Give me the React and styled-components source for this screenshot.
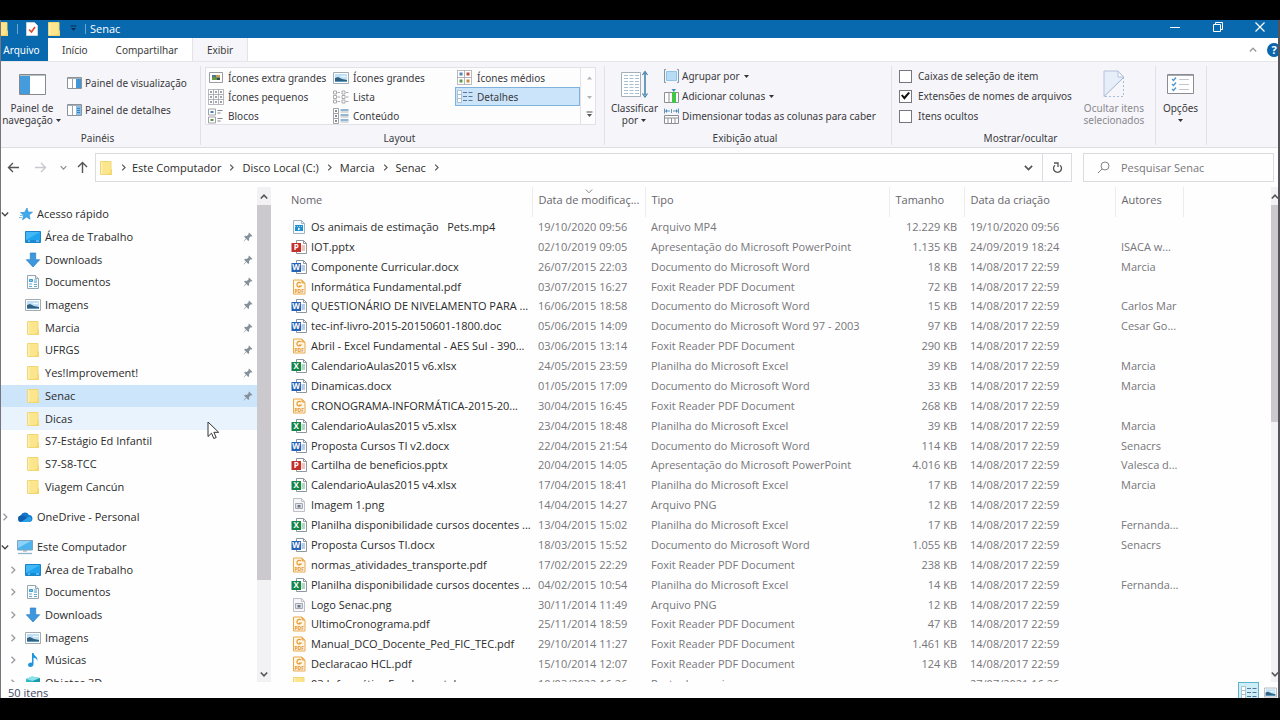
import React from "react";
import styled, { createGlobalStyle } from "styled-components";

const GlobalStyle = createGlobalStyle`
  * {
    box-sizing: border-box;
  }
  body {
    margin: 0;
    background: #000;
  }
  button, input {
    font: inherit;
    color: inherit;
    margin: 0;
  }
  svg {
    display: block;
    flex: none;
  }
`;

const Screen = styled.div`
  height: 100vh;
  padding: 20px 0 22px;
  background: #000;
  font-family: "Open Sans", "Noto Sans", sans-serif;
  font-size: 11px;
  line-height: 16px;
  color: #2b2b2b;
  overflow: hidden;
`;

const Window = styled.div`
  height: 100%;
  display: flex;
  flex-direction: column;
  background: #fefefe;
  border-left: 1px solid #77757c;
  border-right: 2px solid #55535a;
  overflow: hidden;
`;

/* title bar */

const TitleBar = styled.header`
  display: flex;
  align-items: center;
  flex: none;
  height: 18px;
  overflow: hidden;
  background: #0869ae;
  color: #fff;
`;

const QuickTools = styled.div`
  display: flex;
  align-items: center;
  gap: 8px;
  padding-right: 4px;
`;

const QuickSeparator = styled.span`
  width: 1px;
  height: 10px;
  background: #6fa6d0;
`;

const Title = styled.h1`
  flex: 1;
  margin: 0;
  font-size: 11px;
  font-weight: 400;
  line-height: 16px;
`;

const IconButton = styled.button`
  display: flex;
  align-items: center;
  justify-content: center;
  flex: none;
  width: ${(props) => props.$width || 16}px;
  height: ${(props) => props.$height || 16}px;
  padding: 0;
  border: none;
  background: none;
`;

const WindowButtons = styled.div`
  display: flex;
  height: 100%;
  align-items: flex-start;
`;

/* tabs */

const TabBar = styled.nav`
  display: flex;
  flex: none;
  height: 23px;
  background: #fff;
  font-family: "Noto Sans", sans-serif;
  font-size: 10px;
`;

const Tab = styled.button`
  padding: 0 14px;
  border: solid #e3e2e8;
  border-width: ${(props) => (props.$active ? "0 1px" : "0")};
  background: ${(props) => (props.$active ? "#f6f5fa" : "none")};
  color: #3b3b3b;
`;

const FileTab = styled(Tab)`
  width: 47px;
  padding: 0 6px 0 0;
  background: #0869ae;
  color: #fff;
`;

const TabTools = styled.div`
  display: flex;
  align-items: center;
  gap: 10px;
  margin-left: auto;
  width: 29px;
`;

/* ribbon */

const Ribbon = styled.section`
  display: flex;
  flex: none;
  height: 87px;
  padding: 4px 0 2px;
  background: #f6f5fa;
  border-top: 1px solid #e6e5ea;
  border-bottom: 1px solid #dedde2;
  font-family: "Noto Sans", sans-serif;
  font-size: 10px;
  color: #3b3b3f;
`;

const Group = styled.div`
  display: flex;
  flex-direction: column;
  width: ${(props) => props.$width}px;
  border-right: 1px solid #e2e1e7;
`;

const GroupBody = styled.div`
  display: flex;
  flex: 1;
  min-height: 0;
  padding-left: ${(props) => props.$indent || 0}px;
`;

const GroupLabel = styled.div`
  padding-right: 6px;
  text-align: center;
  line-height: 14px;
`;

const BigButton = styled.button`
  display: flex;
  flex-direction: column;
  align-items: center;
  flex: none;
  width: ${(props) => props.$width}px;
  padding: 0;
  border: none;
  background: none;
  line-height: 12px;
  white-space: nowrap;
  color: ${(props) => (props.disabled ? "#8a898e" : "inherit")};
`;

const BigIcon = styled.span`
  display: flex;
  align-items: center;
  height: 36px;
`;

const BigLine = styled.span`
  display: flex;
  align-items: center;
  gap: 2px;
  height: 12px;
`;

const Stack = styled.div`
  display: flex;
  flex-direction: column;
  gap: ${(props) => props.$gap || 0}px;
  padding: ${(props) => props.$top}px 0 0 4px;
`;

const SmallButton = styled.button`
  display: flex;
  align-items: center;
  gap: 3px;
  height: 20px;
  padding: 0;
  border: none;
  background: none;
  white-space: nowrap;
`;

const Gallery = styled.div`
  display: flex;
  width: 391px;
  height: 58px;
  margin-top: 1px;
  background: #fdfdfe;
  border: 1px solid #e2e1e7;
`;

const GalleryGrid = styled.div`
  display: grid;
  grid-template-columns: 125px 124px 125px;
  grid-auto-rows: 19px;
  flex: 1;
`;

const GalleryItem = styled.button`
  display: flex;
  align-items: center;
  gap: 4px;
  padding: 0 1px;
  border: 1px solid ${(props) => (props.$selected ? "#7fb2dc" : "transparent")};
  background: ${(props) => (props.$selected ? "#cbe4fa" : "none")};
  white-space: nowrap;
`;

const GalleryScroll = styled.div`
  display: flex;
  flex-direction: column;
  width: 15px;
  border-left: 1px solid #e2e1e7;
`;

const CheckLabel = styled.label`
  display: flex;
  align-items: center;
  gap: 6px;
  height: 20px;
  white-space: nowrap;
`;

const CheckBox = styled.input`
  appearance: none;
  display: grid;
  place-content: center;
  flex: none;
  width: 13px;
  height: 13px;
  background: #fff;
  border: 1px solid #77767c;

  &:checked::before {
    content: "";
    width: 9px;
    height: 8px;
    background: #111;
    clip-path: polygon(0 45%, 18% 30%, 36% 55%, 82% 0, 100% 14%, 38% 96%);
  }
`;

/* address bar */

const AddressRow = styled.div`
  display: flex;
  align-items: center;
  flex: none;
  height: 39px;
  padding-right: 4px;
`;

const NavButtons = styled.div`
  display: flex;
  align-items: center;
  width: 94px;
  padding-left: 4px;
`;

const AddressBox = styled.div`
  display: flex;
  align-items: center;
  flex: 1;
  height: 29px;
  padding-left: 2px;
  border: 1px solid #dcdbdf;
`;

const Crumb = styled.a`
  color: #2b2b2b;
  text-decoration: none;
  white-space: nowrap;
`;

const AddressEnd = styled.div`
  display: flex;
  align-items: center;
  height: 100%;
  margin-left: auto;
`;

const Refresh = styled(IconButton)`
  height: 100%;
  border-left: 1px solid #dcdbdf;
`;

const SearchBox = styled.label`
  display: flex;
  align-items: center;
  gap: 11px;
  width: 191px;
  height: 29px;
  margin-left: 11px;
  padding-left: 13px;
  border: 1px solid #dcdbdf;
`;

const SearchInput = styled.input`
  flex: 1;
  min-width: 0;
  padding: 0;
  border: none;
  outline: none;
  background: none;

  &::placeholder {
    color: #77767b;
    opacity: 1;
  }
`;

/* body */

const Body = styled.main`
  display: flex;
  flex: 1;
  min-height: 0;
`;

const Sidebar = styled.aside`
  position: relative;
  display: flex;
  flex: none;
  width: 270px;
`;

const Tree = styled.nav`
  flex: 1;
  padding-top: 16px;
  overflow: hidden;
`;

const TreeGroup = styled.ul`
  display: flex;
  flex-direction: column;
  height: ${(props) => props.$height}px;
  margin: 0 0 8px;
  padding: 0;
  list-style: none;
`;

const TreeItem = styled.li`
  display: flex;
  align-items: center;
  flex: 1;
  min-height: 0;
  padding-left: ${(props) => (props.$root ? 0 : 8)}px;
  background: ${(props) =>
    props.$state === "selected"
      ? "#cce5fb"
      : props.$state === "hover"
      ? "#e9f3fd"
      : "none"};
`;

const TreeToggle = styled.span`
  display: flex;
  width: 8px;
  flex: none;
`;

const TreeIcon = styled.span`
  display: flex;
  justify-content: center;
  width: 16px;
  margin: 0 4px 0 8px;
`;

const TreeLink = styled.a`
  flex: 1;
  color: #2b2b2b;
  text-decoration: none;
  white-space: nowrap;
`;

const PinSlot = styled.span`
  padding-right: 4px;
`;

const ScrollTrack = styled.div`
  display: flex;
  flex-direction: column;
  align-items: center;
  flex: none;
  width: ${(props) => props.$width}px;
  padding-top: 2px;
  background: #f2f1f4;
  overflow: hidden;
`;

const ScrollThumb = styled.div`
  width: 100%;
  height: ${(props) => props.$size};
  background: #cbc9cd;
`;

const ScrollEnd = styled.div`
  margin-top: auto;
`;

const Pointer = styled.div`
  position: absolute;
  left: 206px;
  top: 234px;
`;

const FilePane = styled.section`
  flex: 1;
  min-width: 0;
  padding-left: 14px;
  overflow: hidden;
`;

const FileTable = styled.table`
  width: 100%;
  height: calc(100% + 12px);
  table-layout: fixed;
  border-collapse: collapse;
`;

const HeadCell = styled.th`
  position: relative;
  height: 30px;
  padding: 0 0 4px 6px;
  border-right: 1px solid #ececef;
  color: #66656b;
  font-weight: 400;
  text-align: left;
  white-space: nowrap;
  overflow: hidden;

  &:last-child {
    border: none;
  }
`;

const SortMark = styled.span`
  position: absolute;
  top: 0;
  left: 52px;
`;

const Cell = styled.td`
  padding: ${(props) => (props.$right ? "0 7px 0 0" : "0 0 0 6px")};
  color: #77767b;
  text-align: ${(props) => (props.$right ? "right" : "left")};
  white-space: nowrap;
  overflow: hidden;
`;

const FileName = styled.div`
  display: flex;
  align-items: center;
  gap: 4px;
  height: 16px;
  color: #2b2b2b;
`;

const FileText = styled.span`
  flex: 1;
  white-space: pre;
`;

const StatusBar = styled.footer`
  display: flex;
  flex: none;
  height: 16px;
  padding: 3px 0 0 7px;
  overflow: hidden;
  color: #3d4a66;
`;

const ViewButtons = styled.div`
  display: flex;
  gap: 4px;
  margin: -3px 0 0 auto;
`;

const ViewButton = styled(IconButton)`
  align-items: flex-start;
  padding-top: ${(props) => (props.$on ? 2 : 3)}px;
  border: solid ${(props) => (props.$on ? "#5eb3cc" : "transparent")};
  border-width: 1px 1px 0;
  background: ${(props) => (props.$on ? "#cdeef8" : "none")};
`;

/* icons */

const Chevron = ({ dir = "right", color = "#555", size = 8, weight = 1.3 }) => {
  const d = {
    right: "M2.5 0.8 L5.8 4 L2.5 7.2",
    down: "M0.8 2.5 L4 5.8 L7.2 2.5",
    up: "M0.8 5.5 L4 2.2 L7.2 5.5",
  }[dir];
  return (
    <svg width={size} height={size} viewBox="0 0 8 8">
      <path d={d} fill="none" stroke={color} strokeWidth={weight} />
    </svg>
  );
};

const Caret = ({ color = "#333", dir = "down", bar }) => (
  <svg width="7" height="8" viewBox="0 0 7 8">
    {bar && <path d="M0.5 1h6" stroke={color} />}
    <path d={dir === "up" ? "M1 5.5h5L3.5 2.5z" : "M1 3h5L3.5 6z"} fill={color} />
  </svg>
);

const Folder = ({ cut }) => (
  <svg width={cut ? 8 : 16} height="16" viewBox={cut ? "7 0 8 16" : "0 0 16 16"}>
    <path d="M2.5 1.5h10.5v13H2.5z" fill="#fbe58d" stroke="#f0d774" />
    <path d="M12.5 9.5h1.500v5.500H9v-1l3.500-1z" fill="#f3d76c" />
    <path d="M3 2h1.5v12H3z" fill="#fdf0b2" />
  </svg>
);

const Desktop = () => (
  <svg width="16" height="16" viewBox="0 0 16 16">
    <path d="M0.5 2.5h15v11H0.5z" fill="#1fa3ee" stroke="#1b83c6" />
    <path d="M1 3h14L1 11z" fill="#42b8f7" />
    <path d="M1 12h14" stroke="#1276b8" />
    <path d="M3 12h2M11 12h3" stroke="#9fdcff" />
  </svg>
);

const Download = () => (
  <svg width="16" height="16" viewBox="0 0 16 16">
    <path d="M5.3 1h5.4v6.7h4L8 15 1.3 7.7h4z" fill="#3d97dd" stroke="#2a7fc6" strokeWidth=".7" />
  </svg>
);

const Documents = () => (
  <svg width="16" height="16" viewBox="0 0 16 16">
    <path d="M2.5 1.5h8l3 3v10h-11z" fill="#f8fbfd" stroke="#97a5ae" />
    <path d="M10.5 1.5v3h3" fill="#dfe8ee" stroke="#97a5ae" />
    <path d="M4.5 5.5h3v2h-3zM9 8h3" stroke="#3f9bc9" fill="#83c6e4" />
    <path d="M4 10h3M9 6h3M4 12.5h3M9 10.5h3M9 12.5h3" stroke="#67a9cc" />
  </svg>
);

const Picture = ({ width = 16, height = 16 }) => (
  <svg width={width} height={height} viewBox="0 0 16 16">
    <path d="M0.5 2.5h15v11H0.5z" fill="#fff" stroke="#a3abb3" />
    <path d="M2 4h12v8H2z" fill="#bfe0f6" />
    <path d="M2 8l3-1 4 2 5 1v2H2z" fill="#31617f" />
    <path d="M2 11h12v1H2z" fill="#5a9bc4" />
    <path d="M8 6h5v1H8z" fill="#f2fafe" />
  </svg>
);

const Star = () => (
  <svg width="16" height="16" viewBox="0 0 16 16">
    <path d="M10 2l1.2 4 4.3.2-3.400 2.700 1 4.300L9.600 11 5.500 13.800l1.200-4.500L3.500 6.600l4.200-.3z" fill="#3fa9ea" stroke="#248bd0" strokeWidth=".6" />
    <path d="M3 9.500h3M2 11.500h3" stroke="#7cc6f3" />
  </svg>
);

const Cloud = () => (
  <svg width="16" height="16" viewBox="0 0 16 16">
    <path d="M3.5 13a3.4 3.4 0 0 1 .2-6.6A4.6 4.6 0 0 1 12 6a3.6 3.6 0 0 1 1 7z" fill="#1277ca" />
    <path d="M3.5 13c3-1 4.500-4 9-5.500A3 3 0 0 1 13 13z" fill="#2aa0e8" />
    <path d="M3.700 6.400C6 6 8.500 8 10 9L3.500 13a3.400 3.400 0 0 1 .2-6.600" fill="#0d5fae" />
  </svg>
);

const Computer = () => (
  <svg width="16" height="16" viewBox="0 0 16 16">
    <path d="M0.500 1.500h15v9.500h-15z" fill="#4db3ee" stroke="#7fa4bb" />
    <path d="M1 2h13L1 9z" fill="#8bd2fa" />
    <path d="M6 12h4" stroke="#8fa0ad" />
    <path d="M1 14.500h14" stroke="#8fb3c8" strokeWidth="1.300" />
  </svg>
);

const Music = () => (
  <svg width="16" height="16" viewBox="0 0 16 16">
    <path d="M7 1h1.500c.5 3 4.500 3.500 4 8-.5-2-2-3-4-3.200V12c0 2-1.300 3-3 3-1.500 0-2.500-.8-2.500-2 0-1.800 2-2.700 4-2.300z" fill="#1e94dc" />
  </svg>
);

const Objects3D = () => (
  <svg width="16" height="16" viewBox="0 0 16 16">
    <path d="M1 4l6-2.500L15 3v9l-7 3-7-3z" fill="#31b8c6" />
    <path d="M1 4l6-2.500L15 3 8 6z" fill="#8ce2e8" />
    <path d="M8 6l7-3v9l-7 3z" fill="#1b9aad" />
  </svg>
);

const Pin = () => (
  <svg width="10" height="10" viewBox="0 0 10 10">
    <path d="M6 0.500l3.500 3.500-1 .5-.8-.2L6 6.200 6.200 8l-.9.900L3.400 7 .8 9.500.5 9.200 3 6.600 1.100 4.700l.9-.9 1.800.2 1.900-1.700-.2-.8z" fill="#84909a" />
  </svg>
);

const OfficeIcon = ({ letter, color, tint }) => (
  <svg width="16" height="16" viewBox="0 0 16 16">
    <path d="M5.500 1.500h7l3 3v10h-10z" fill="#fff" stroke="#8e979e" />
    <path d="M12.500 1.500v3h3" fill="none" stroke="#8e979e" />
    <path d="M10.500 7h3.500M10.500 9h3.500M10.500 11h3.500" stroke={tint} />
    <path d="M0.500 4h9.500v9H0.500z" fill={color} />
    <text x="5.200" y="11.200" textAnchor="middle" fontSize="8" fontWeight="700" fill="#fff">
      {letter}
    </text>
  </svg>
);

const PdfIcon = () => (
  <svg width="16" height="16" viewBox="0 0 16 16">
    <path d="M2.500 1h8.500l3 3v11h-11.500z" fill="#fff6e4" stroke="#eaa84c" />
    <path d="M11 1v3h3" fill="#f0b866" stroke="#eaa84c" />
    <path d="M9.800 4A2.300 2.300 0 1 0 10 7.200H8" fill="none" stroke="#e79a35" strokeWidth="1.200" />
    <text x="8.200" y="13.800" textAnchor="middle" fontSize="5" fontWeight="700" fill="#e3922a">
      PDF
    </text>
  </svg>
);

const VideoIcon = () => (
  <svg width="16" height="16" viewBox="0 0 16 16">
    <path d="M2.500 1.500h8l3 3v10h-11z" fill="#f4fafd" stroke="#9fb4c0" />
    <path d="M10.500 1.500v3h3" fill="none" stroke="#9fb4c0" />
    <path d="M4 6h8v6H4z" fill="#1f91d0" />
    <path d="M4 7.500h8" stroke="#8fd2f4" strokeDasharray="1 1" />
    <path d="M7 8.500v3l2.500-1.500z" fill="#fff" />
  </svg>
);

const PngIcon = () => (
  <svg width="16" height="16" viewBox="0 0 16 16">
    <path d="M2.500 1.500h8l3 3v10h-11z" fill="#f7f7f9" stroke="#bfbfc6" />
    <path d="M10.500 1.500v3h3" fill="none" stroke="#bfbfc6" />
    <path d="M4.500 6.500h7v5h-7z" fill="#dfe3ea" stroke="#a3a8b2" />
    <path d="M6.500 8h3v2.500h-3z" fill="#6d7480" />
  </svg>
);

const fileIcons = {
  mp4: <VideoIcon />,
  ppt: <OfficeIcon letter="P" color="#c2302c" tint="#e08a80" />,
  doc: <OfficeIcon letter="W" color="#2a62b5" tint="#6f9bd6" />,
  xls: <OfficeIcon letter="X" color="#17854a" tint="#63b088" />,
  pdf: <PdfIcon />,
  png: <PngIcon />,
  dir: <Folder />,
};

const PaneIcon = ({ side }) => (
  <svg width="15" height="12" viewBox="0 0 15 12">
    <path d="M0.500 0.500h14v11h-14z" fill="#fff" stroke="#8c939a" />
    <path d="M1 1.500h13" stroke="#a5adb5" />
    <path d="M5.500 2v9" stroke="#9aa3ab" />
    <path d="M9 2h5v9H9z" fill={side === "details" ? "#86bfe9" : "#4295d6"} />
    {side === "details" && <path d="M10 4.500h3M10 6.500h3M10 8.500h3" stroke="#3c83bd" />}
  </svg>
);

const NavPaneIcon = () => (
  <svg width="27" height="21" viewBox="0 0 27 21">
    <path d="M0.500 0.500h26v20h-26z" fill="#fff" stroke="#84898f" />
    <path d="M1 1.500h25" stroke="#b9bec4" />
    <path d="M1 2h10v18H1z" fill="#459cdc" />
  </svg>
);

const GridThumb = ({ kind }) => {
  if (kind === "extra") {
    return (
      <svg width="16" height="16" viewBox="0 0 16 16">
        <path d="M1.500 2.500h13v10h-13z" fill="#fff" stroke="#9a9aa2" />
        <path d="M4 5h8v5H4z" fill="#4a7a8e" />
        <path d="M4 8l2-1.500 3 2.500v1H4z" fill="#6a9c3c" />
        <path d="M8 5h4v2.500H8z" fill="#c9a14c" />
        <path d="M9 8h3v2H9z" fill="#3a4c56" />
      </svg>
    );
  }
  if (kind === "medium" || kind === "small") {
    const n = kind === "medium" ? 2 : 3;
    const size = n === 2 ? 7 : 5;
    const marks = ["#4a86b8", "#b5563d", "#5c9a4c", "#c28d3c"];
    return (
      <svg width="16" height="16" viewBox="0 0 16 16">
        {Array.from({ length: n * n }, (_, i) => {
          const x = (i % n) * size + 0.5;
          const y = Math.floor(i / n) * size + 0.5;
          return (
            <g key={i}>
              <rect x={x} y={y} width={size} height={size} fill="#fff" stroke="#aaa9b0" strokeWidth=".8" />
              <rect
                x={x + size / 2 - (n === 2 ? 1.5 : 0.8)}
                y={y + size / 2 - (n === 2 ? 1.5 : 0.8)}
                width={n === 2 ? 3 : 1.6}
                height={n === 2 ? 3 : 1.6}
                fill={n === 2 ? marks[i] : "#66707a"}
              />
            </g>
          );
        })}
      </svg>
    );
  }
  if (kind === "list") {
    return (
      <svg width="16" height="16" viewBox="0 0 16 16">
        {[2, 6.5, 11].map((y) => (
          <g key={y} fill="#fff" stroke="#95959d" strokeWidth=".8">
            <path d={`M0.5 ${y}h3v3h-3zM9 ${y}h3v3H9z`} />
            <path d={`M4.5 ${y + 1.5}h2.5M13 ${y + 1.5}h2.5`} />
          </g>
        ))}
      </svg>
    );
  }
  if (kind === "tiles") {
    return (
      <svg width="16" height="16" viewBox="0 0 16 16">
        <path d="M0.500 1h7v6h-7zM0.500 9h7v6h-7z" fill="#fff" stroke="#a2a1a9" />
        <path d="M2.500 3h3v2h-3z" fill="#3f83b8" />
        <path d="M2.500 11h3v2h-3z" fill="#5c9346" />
        <path d="M9.500 2.500h5M9.500 5h3M9.500 10.500h5M9.500 13h3" stroke="#7f868d" />
      </svg>
    );
  }
  if (kind === "content") {
    return (
      <svg width="16" height="16" viewBox="0 0 16 16">
        <path d="M0.500 0.500h5v5h-5zM0.500 5.500h5v5h-5zM0.500 10.500h5v5h-5z" fill="#fff" stroke="#a2a1a9" />
        <path d="M2 3h2M2 8h2M2 13h2" stroke="#5c6a74" strokeWidth="1.500" />
        <path d="M7.500 2h8M7.500 7h8M7.500 12h8" stroke="#6d9fc6" strokeWidth="1.400" />
        <path d="M7.500 4h8M7.500 9h8M7.500 14h8" stroke="#b3b6bc" />
      </svg>
    );
  }
  return (
    <svg width="16" height="16" viewBox="0 0 16 16">
      {[3.5, 7.5, 11.5].map((y) => (
        <g key={y}>
          <path d={`M0.5 ${y - 2}h4v4h-4z`} fill="#fff" stroke="#a2b5c4" strokeWidth=".8" />
          <path d={`M6 ${y}h4M11.5 ${y}h4`} stroke="#55799e" />
        </g>
      ))}
    </svg>
  );
};

const SortIcon = () => (
  <svg width="27" height="28" viewBox="0 0 27 28">
    <path d="M0.500 2.500h19v24h-19z" fill="#fff" stroke="#a4b0b9" />
    <path d="M3 5.500h15M3 8.500h15M3 11.500h15M3 14.500h15M3 17.500h15M3 20.500h15M3 23.500h15" stroke="#a9c0d0" strokeDasharray="4 1.500" />
    <path d="M24 3v22" stroke="#3c7fa6" strokeWidth="1.500" />
    <path d="M21.500 5L24 1.500 26.500 5M21.500 23.500L24 27l2.500-3.500" fill="none" stroke="#3c7fa6" strokeWidth="1.200" />
  </svg>
);

const GroupByIcon = () => (
  <svg width="15" height="14" viewBox="0 0 15 14">
    <path d="M2.500 2.500h10v9h-10z" fill="#b7dcf6" stroke="#92c3e6" />
    <path d="M2 0.500H0.500v13H2M13 0.500h1.500v13H13" fill="none" stroke="#7e97a8" />
  </svg>
);

const AddColumnIcon = () => (
  <svg width="15" height="15" viewBox="0 0 15 15">
    <path d="M0.500 3.500h14v10h-14zM5 3.500v10" fill="#fff" stroke="#8b8f94" />
    <path d="M8 3h4v11H8z" fill="#43c648" />
    <path d="M7.500 0h4.500L9.800 3z" fill="#3f8fc6" />
  </svg>
);

const FitColumnsIcon = () => (
  <svg width="15" height="16" viewBox="0 0 15 16">
    <path d="M0.500 0.500v5M14.500 0.500v5M2 3h4M9 3h4M7.500 1v4" stroke="#5f96bd" />
    <path d="M1 3l2-2v4zM14 3l-2-2v4z" fill="#4a87b3" />
    <path d="M0.500 7.500h14v8h-14zM0.500 10h14M4 10v5.500M7.500 10v5.500M11 10v5.500" fill="#fff" stroke="#8b8f94" />
  </svg>
);

const HideIcon = () => (
  <svg width="22" height="28" viewBox="0 0 22 28">
    <path d="M1 1h14l6 6L1 26.500z" fill="#e6eefa" />
    <path d="M1 26.500V1h14l5.500 5.500" fill="none" stroke="#b3c3dc" />
    <path d="M15 1v6h5.500z" fill="#fafcff" stroke="#b3c3dc" />
    <path d="M1 26.500L20.500 7.500" stroke="#a3b5d2" />
    <path d="M20.500 7v19.500H1" fill="none" stroke="#a9bcd8" strokeDasharray="2 2" />
  </svg>
);

const OptionsIcon = () => (
  <svg width="27" height="20" viewBox="0 0 27 20">
    <path d="M0.500 0.500h26v19h-26z" fill="#fff" stroke="#8b8c91" />
    <path d="M1 1.500h25" stroke="#a9aaaf" />
    <path d="M5 5l1.500 1.500L9 3.500M5 10l1.500 1.500L9 8.500M5 15l1.500 1.500L9 13.500" fill="none" stroke="#4b95d2" strokeWidth="1.300" />
    <path d="M12 5.500h10M12 10.500h10M12 15.500h10" stroke="#c4c6cb" />
  </svg>
);

const Arrow = ({ dir, color }) => (
  <svg width="13" height="13" viewBox="0 0 13 13">
    <path
      d={
        dir === "left"
          ? "M12 6.500H1.500M6 2L1.500 6.500 6 11"
          : dir === "right"
          ? "M1 6.500h10.500M7 2l4.500 4.500L7 11"
          : "M6.500 12V1.500M2 6l4.500-4.500L11 6"
      }
      fill="none"
      stroke={color}
      strokeWidth="1.400"
    />
  </svg>
);

const CheckPage = () => (
  <svg width="12" height="14" viewBox="0 0 12 14">
    <path d="M0.500 0.500h8l3 3v10H0.500z" fill="#fff" stroke="#c9d3dc" />
    <path d="M3 7.500l2.500 2.500L9 5" fill="none" stroke="#e0472e" strokeWidth="1.600" />
  </svg>
);

/* data */

const galleryItems = [
  ["extra", "Ícones extra grandes"],
  ["large", "Ícones grandes"],
  ["medium", "Ícones médios"],
  ["small", "Ícones pequenos"],
  ["list", "Lista"],
  ["details", "Detalhes"],
  ["tiles", "Blocos"],
  ["content", "Conteúdo"],
];

const crumbs = ["Este Computador", "Disco Local (C:)", "Marcia", "Senac"];

const quickAccess = [
  { text: "Área de Trabalho", icon: <Desktop />, pinned: true },
  { text: "Downloads", icon: <Download />, pinned: true },
  { text: "Documentos", icon: <Documents />, pinned: true },
  { text: "Imagens", icon: <Picture />, pinned: true },
  { text: "Marcia", icon: <Folder />, pinned: true },
  { text: "UFRGS", icon: <Folder />, pinned: true },
  { text: "Yes!Improvement!", icon: <Folder />, pinned: true },
  { text: "Senac", icon: <Folder />, pinned: true, state: "selected" },
  { text: "Dicas", icon: <Folder />, state: "hover" },
  { text: "S7-Estágio Ed Infantil", icon: <Folder /> },
  { text: "S7-S8-TCC", icon: <Folder /> },
  { text: "Viagem Cancún", icon: <Folder /> },
];

const computer = [
  { text: "Área de Trabalho", icon: <Desktop />, toggle: true },
  { text: "Documentos", icon: <Documents />, toggle: true },
  { text: "Downloads", icon: <Download />, toggle: true },
  { text: "Imagens", icon: <Picture />, toggle: true },
  { text: "Músicas", icon: <Music />, toggle: true },
  { text: "Objetos 3D", icon: <Objects3D />, toggle: true },
];

const WORD = "Documento do Microsoft Word";
const EXCEL = "Planilha do Microsoft Excel";
const POWERPOINT = "Apresentação do Microsoft PowerPoint";
const PDF = "Foxit Reader PDF Document";
const CREATED = "14/08/2017 22:59";

const files = [
  ["mp4", "Os animais de estimação   Pets.mp4", "19/10/2020 09:56", "Arquivo MP4", "12.229 KB", "19/10/2020 09:56", ""],
  ["ppt", "IOT.pptx", "02/10/2019 09:05", POWERPOINT, "1.135 KB", "24/09/2019 18:24", "ISACA w..."],
  ["doc", "Componente Curricular.docx", "26/07/2015 22:03", WORD, "18 KB", CREATED, "Marcia"],
  ["pdf", "Informática Fundamental.pdf", "03/07/2015 16:27", PDF, "72 KB", CREATED, ""],
  ["doc", "QUESTIONÁRIO DE NIVELAMENTO PARA ...", "16/06/2015 18:58", WORD, "15 KB", CREATED, "Carlos Mar"],
  ["doc", "tec-inf-livro-2015-20150601-1800.doc", "05/06/2015 14:09", "Documento do Microsoft Word 97 - 2003", "97 KB", CREATED, "Cesar Go..."],
  ["pdf", "Abril - Excel Fundamental - AES Sul - 390...", "03/06/2015 13:14", PDF, "290 KB", CREATED, ""],
  ["xls", "CalendarioAulas2015 v6.xlsx", "24/05/2015 23:59", EXCEL, "39 KB", CREATED, "Marcia"],
  ["doc", "Dinamicas.docx", "01/05/2015 17:09", WORD, "33 KB", CREATED, "Marcia"],
  ["pdf", "CRONOGRAMA-INFORMÁTICA-2015-20...", "30/04/2015 16:45", PDF, "268 KB", CREATED, ""],
  ["xls", "CalendarioAulas2015 v5.xlsx", "23/04/2015 18:48", EXCEL, "39 KB", CREATED, "Marcia"],
  ["doc", "Proposta Cursos TI v2.docx", "22/04/2015 21:54", WORD, "114 KB", CREATED, "Senacrs"],
  ["ppt", "Cartilha de beneficios.pptx", "20/04/2015 14:05", POWERPOINT, "4.016 KB", CREATED, "Valesca d..."],
  ["xls", "CalendarioAulas2015 v4.xlsx", "17/04/2015 18:41", EXCEL, "17 KB", CREATED, "Marcia"],
  ["png", "Imagem 1.png", "14/04/2015 14:27", "Arquivo PNG", "12 KB", CREATED, ""],
  ["xls", "Planilha disponibilidade cursos docentes ...", "13/04/2015 15:02", EXCEL, "17 KB", CREATED, "Fernanda..."],
  ["doc", "Proposta Cursos TI.docx", "18/03/2015 15:52", WORD, "1.055 KB", CREATED, "Senacrs"],
  ["pdf", "normas_atividades_transporte.pdf", "17/02/2015 22:29", PDF, "238 KB", CREATED, ""],
  ["xls", "Planilha disponibilidade cursos docentes ...", "04/02/2015 10:54", EXCEL, "14 KB", CREATED, "Fernanda..."],
  ["png", "Logo Senac.png", "30/11/2014 11:49", "Arquivo PNG", "12 KB", CREATED, ""],
  ["pdf", "UltimoCronograma.pdf", "25/11/2014 18:59", PDF, "47 KB", CREATED, ""],
  ["pdf", "Manual_DCO_Docente_Ped_FIC_TEC.pdf", "29/10/2014 11:27", PDF, "1.461 KB", CREATED, ""],
  ["pdf", "Declaracao HCL.pdf", "15/10/2014 12:07", PDF, "124 KB", CREATED, ""],
  ["dir", "03 Informática Fundamental", "10/03/2022 16:26", "Pasta de arquivos", "", "27/07/2021 16:26", ""],
];

const columnWidths = [247, 113, 244, 75, 151, 68];

const TreeRow = ({ item, root, open }) => (
  <TreeItem $root={root} $state={item.state}>
    <TreeToggle>
      {(root || item.toggle) && (
        <Chevron
          dir={open ? "down" : "right"}
          color={open ? "#444" : "#9a999e"}
        />
      )}
    </TreeToggle>
    <TreeIcon>{item.icon}</TreeIcon>
    <TreeLink href="#">{item.text}</TreeLink>
    {item.pinned && (
      <PinSlot>
        <Pin />
      </PinSlot>
    )}
  </TreeItem>
);

const ViewRibbon = () => (
  <Ribbon>
    <Group $width={200}>
      <GroupBody>
        <BigButton $width={62}>
          <BigIcon>
            <NavPaneIcon />
          </BigIcon>
          <BigLine>Painel de</BigLine>
          <BigLine>
            navegação <Caret />
          </BigLine>
        </BigButton>
        <Stack $top={7} $gap={7}>
          <SmallButton>
            <PaneIcon side="preview" /> Painel de visualização
          </SmallButton>
          <SmallButton>
            <PaneIcon side="details" /> Painel de detalhes
          </SmallButton>
        </Stack>
      </GroupBody>
      <GroupLabel>Painéis</GroupLabel>
    </Group>
    <Group $width={404}>
      <GroupBody $indent={4}>
        <Gallery>
          <GalleryGrid>
            {galleryItems.map(([kind, text]) => (
              <GalleryItem key={kind} $selected={kind === "details"}>
                {kind === "large" ? <Picture /> : <GridThumb kind={kind} />}
                {text}
              </GalleryItem>
            ))}
          </GalleryGrid>
          <GalleryScroll>
            <IconButton $height={19} aria-label="Acima">
              <Caret dir="up" color="#b3b2b8" />
            </IconButton>
            <IconButton $height={19} aria-label="Abaixo">
              <Caret color="#b3b2b8" />
            </IconButton>
            <IconButton $height={17} aria-label="Mais">
              <Caret bar color="#555" />
            </IconButton>
          </GalleryScroll>
        </Gallery>
      </GroupBody>
      <GroupLabel>Layout</GroupLabel>
    </Group>
    <Group $width={287}>
      <GroupBody $indent={4}>
        <BigButton $width={51}>
          <BigIcon>
            <SortIcon />
          </BigIcon>
          <BigLine>Classificar</BigLine>
          <BigLine>
            por <Caret />
          </BigLine>
        </BigButton>
        <Stack $top={0}>
          <SmallButton>
            <GroupByIcon /> Agrupar por <Caret />
          </SmallButton>
          <SmallButton>
            <AddColumnIcon /> Adicionar colunas <Caret />
          </SmallButton>
          <SmallButton>
            <FitColumnsIcon /> Dimensionar todas as colunas para caber
          </SmallButton>
        </Stack>
      </GroupBody>
      <GroupLabel>Exibição atual</GroupLabel>
    </Group>
    <Group $width={264}>
      <GroupBody $indent={3}>
        <Stack $top={0}>
          <CheckLabel>
            <CheckBox type="checkbox" /> Caixas de seleção de item
          </CheckLabel>
          <CheckLabel>
            <CheckBox type="checkbox" defaultChecked /> Extensões de nomes de arquivos
          </CheckLabel>
          <CheckLabel>
            <CheckBox type="checkbox" /> Itens ocultos
          </CheckLabel>
        </Stack>
        <BigButton $width={84} disabled>
          <BigIcon>
            <HideIcon />
          </BigIcon>
          <BigLine>Ocultar itens</BigLine>
          <BigLine>selecionados</BigLine>
        </BigButton>
      </GroupBody>
      <GroupLabel>Mostrar/ocultar</GroupLabel>
    </Group>
    <Group $width={51}>
      <BigButton $width={49}>
        <BigIcon>
          <OptionsIcon />
        </BigIcon>
        <BigLine>Opções</BigLine>
        <BigLine>
          <Caret />
        </BigLine>
      </BigButton>
    </Group>
  </Ribbon>
);

const App = () => {
  return (
    <Screen>
      <GlobalStyle />
      <Window>
        <TitleBar>
          <QuickTools>
            <Folder cut />
            <QuickSeparator />
            <CheckPage />
            <Folder />
            <Caret bar color="#0b2c4a" />
            <QuickSeparator />
          </QuickTools>
          <Title>Senac</Title>
          <WindowButtons>
            <IconButton $width={38} $height={14} aria-label="Minimizar">
              <svg width="10" height="10" viewBox="0 0 10 10">
                <path d="M0 5.500h10" stroke="#fff" />
              </svg>
            </IconButton>
            <IconButton $width={48} $height={14} aria-label="Restaurar">
              <svg width="10" height="10" viewBox="0 0 10 10">
                <path d="M0.500 2.500h7v7h-7zM2.500 2.500v-2h7v7h-2" fill="none" stroke="#fff" />
              </svg>
            </IconButton>
            <IconButton $width={36} $height={14} aria-label="Fechar">
              <svg width="10" height="10" viewBox="0 0 10 10">
                <path d="M0.500 0.500l9 9M9.500 0.500l-9 9" stroke="#fff" strokeWidth="1.200" />
              </svg>
            </IconButton>
          </WindowButtons>
        </TitleBar>

        <TabBar>
          <FileTab>Arquivo</FileTab>
          <Tab>Início</Tab>
          <Tab>Compartilhar</Tab>
          <Tab $active>Exibir</Tab>
          <TabTools>
            <Chevron dir="up" color="#9a999e" />
            <svg width="14" height="14" viewBox="0 0 14 14">
              <circle cx="7" cy="7" r="7" fill="#0c66ad" />
              <text x="7" y="11" textAnchor="middle" fontSize="11" fontWeight="700" fill="#fff">
                ?
              </text>
            </svg>
          </TabTools>
        </TabBar>

        <ViewRibbon />

        <AddressRow>
          <NavButtons>
            <IconButton $width={16} aria-label="Voltar">
              <Arrow dir="left" color="#555" />
            </IconButton>
            <IconButton $width={38} aria-label="Avançar">
              <Arrow dir="right" color="#c9c8cd" />
            </IconButton>
            <IconButton $width={8} aria-label="Locais recentes">
              <Chevron dir="down" color="#8a898e" size={7} />
            </IconButton>
            <IconButton $width={30} aria-label="Acima">
              <Arrow dir="up" color="#555" />
            </IconButton>
          </NavButtons>
          <AddressBox>
            <Folder />
            {crumbs.map((text, i) => (
              <React.Fragment key={text}>
                <IconButton $width={i === 0 ? 18 : 21} aria-label="Expandir">
                  <Chevron size={7} />
                </IconButton>
                <Crumb href="#">{text}</Crumb>
              </React.Fragment>
            ))}
            <IconButton $width={21} aria-label="Expandir">
              <Chevron size={7} />
            </IconButton>
            <AddressEnd>
              <IconButton $width={27} aria-label="Histórico">
                <Chevron dir="down" size={9} weight={1.5} />
              </IconButton>
              <Refresh $width={29} aria-label="Atualizar">
                <svg width="11" height="12" viewBox="0 0 11 12">
                  <path d="M8 3.200A4 4 0 1 1 3 3.200" fill="none" stroke="#555" strokeWidth="1.300" />
                  <path d="M2 1h4v4" fill="none" stroke="#555" strokeWidth="1.300" />
                </svg>
              </Refresh>
            </AddressEnd>
          </AddressBox>
          <SearchBox>
            <svg width="13" height="13" viewBox="0 0 13 13">
              <circle cx="8" cy="5" r="4" fill="none" stroke="#85848a" />
              <path d="M5 8L1 12" stroke="#85848a" />
            </svg>
            <SearchInput aria-label="Pesquisar" placeholder="Pesquisar Senac" />
          </SearchBox>
        </AddressRow>

        <Body>
          <Sidebar>
            <Tree>
              <TreeGroup $height={295}>
                <TreeRow root open item={{ text: "Acesso rápido", icon: <Star /> }} />
                {quickAccess.map((item) => (
                  <TreeRow key={item.text} item={item} />
                ))}
              </TreeGroup>
              <TreeGroup $height={22}>
                <TreeRow root item={{ text: "OneDrive - Personal", icon: <Cloud /> }} />
              </TreeGroup>
              <TreeGroup $height={158}>
                <TreeRow root open item={{ text: "Este Computador", icon: <Computer /> }} />
                {computer.map((item) => (
                  <TreeRow key={item.text} item={item} />
                ))}
              </TreeGroup>
            </Tree>
            <ScrollTrack $width={14}>
              <IconButton $width={14} aria-label="Rolar para cima">
                <Chevron dir="up" weight={1.6} />
              </IconButton>
              <ScrollThumb $size="76%" />
              <ScrollEnd>
                <IconButton $width={14} aria-label="Rolar para baixo">
                  <Chevron dir="down" weight={1.6} />
                </IconButton>
              </ScrollEnd>
            </ScrollTrack>
            <Pointer>
              <svg width="13" height="19" viewBox="0 0 13 19">
                <path d="M1 1v14.500l3.500-3.300 2.300 5.300 2.400-1-2.300-5.200h4.800z" fill="#fff" stroke="#333" />
              </svg>
            </Pointer>
          </Sidebar>

          <FilePane>
            <FileTable>
              <colgroup>
                {columnWidths.map((width, i) => (
                  <col key={i} width={width} />
                ))}
                <col />
              </colgroup>
              <thead>
                <tr>
                  <HeadCell>Nome</HeadCell>
                  <HeadCell>
                    Data de modificaç...
                    <SortMark>
                      <Chevron dir="down" color="#8a898e" weight={1} />
                    </SortMark>
                  </HeadCell>
                  <HeadCell>Tipo</HeadCell>
                  <HeadCell>Tamanho</HeadCell>
                  <HeadCell>Data da criação</HeadCell>
                  <HeadCell>Autores</HeadCell>
                  <HeadCell />
                </tr>
              </thead>
              <tbody>
                {files.map(([icon, name, modified, type, size, created, author]) => (
                  <tr key={name + modified}>
                    <Cell>
                      <FileName>
                        {fileIcons[icon]}
                        <FileText>{name}</FileText>
                      </FileName>
                    </Cell>
                    <Cell>{modified}</Cell>
                    <Cell>{type}</Cell>
                    <Cell $right>{size}</Cell>
                    <Cell>{created}</Cell>
                    <Cell>{author}</Cell>
                    <Cell />
                  </tr>
                ))}
              </tbody>
            </FileTable>
          </FilePane>
          <ScrollTrack $width={7}>
            <IconButton $width={8} aria-label="Rolar para cima">
              <Chevron dir="up" weight={1.6} />
            </IconButton>
            <ScrollThumb $size="44%" />
            <ScrollEnd>
              <IconButton $width={8} aria-label="Rolar para baixo">
                <Chevron dir="down" weight={1.6} />
              </IconButton>
            </ScrollEnd>
          </ScrollTrack>
        </Body>

        <StatusBar>
          50 itens
          <ViewButtons>
            <ViewButton $on $width={21} aria-label="Detalhes">
              <GridThumb kind="details" />
            </ViewButton>
            <ViewButton $width={15} aria-label="Miniaturas">
              <Picture width={13} height={13} />
            </ViewButton>
          </ViewButtons>
        </StatusBar>
      </Window>
    </Screen>
  );
};

export default App;
